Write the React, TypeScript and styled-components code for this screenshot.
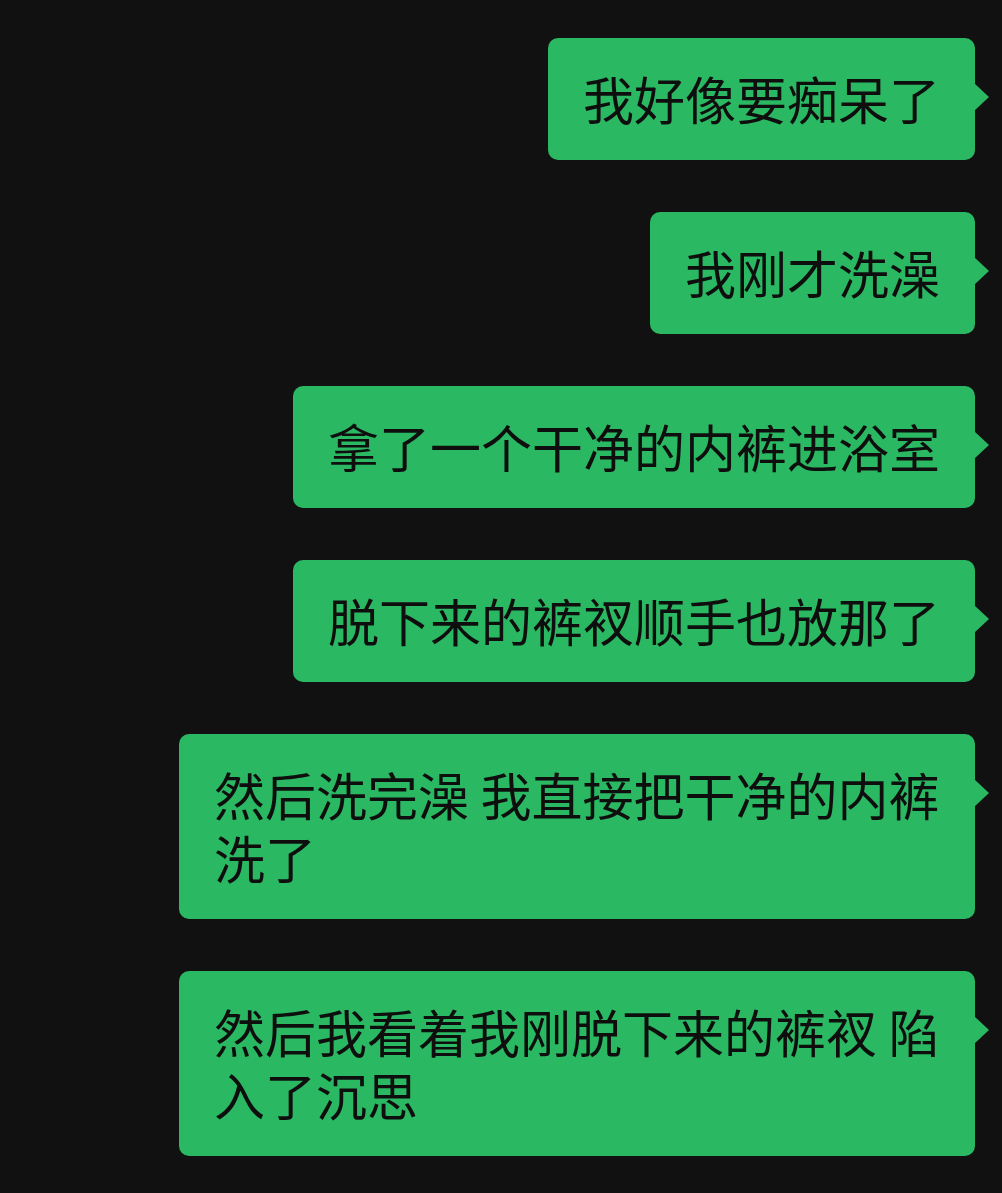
import React from 'react';
import styled, { createGlobalStyle } from 'styled-components';

const GREEN = '#2bb862';

const GlobalStyle = createGlobalStyle`
  html, body {
    margin: 0;
    padding: 0;
    background: #111111;
  }
`;

const Chat = styled.main`
  display: flex;
  flex-direction: column;
  align-items: flex-end;
  gap: 52px;
  padding: 38px 27px 37px 0;
  min-height: 1193px;
  box-sizing: border-box;
  font-family: 'Noto Sans CJK SC', 'Noto Sans', sans-serif;
`;

const Bubble = styled.div`
  position: relative;
  max-width: 796px;
  box-sizing: border-box;
  padding: 29px 35px 30px 35px;
  background: ${GREEN};
  border-radius: 10px;
  color: #0e0e0e;
  font-size: 51px;
  line-height: 63px;
  word-break: break-all;

  &::after {
    content: '';
    position: absolute;
    right: -14px;
    top: 45px;
    border-left: 15px solid ${GREEN};
    border-top: 14px solid transparent;
    border-bottom: 14px solid transparent;
  }
`;

const messages = [
  '我好像要痴呆了',
  '我刚才洗澡',
  '拿了一个干净的内裤进浴室',
  '脱下来的裤衩顺手也放那了',
  '然后洗完澡 我直接把干净的内裤洗了',
  '然后我看着我刚脱下来的裤衩 陷入了沉思',
];

export default function App() {
  return (
    <>
      <GlobalStyle />
      <Chat>
        {messages.map((text) => (
          <Bubble key={text}>{text}</Bubble>
        ))}
      </Chat>
    </>
  );
}
